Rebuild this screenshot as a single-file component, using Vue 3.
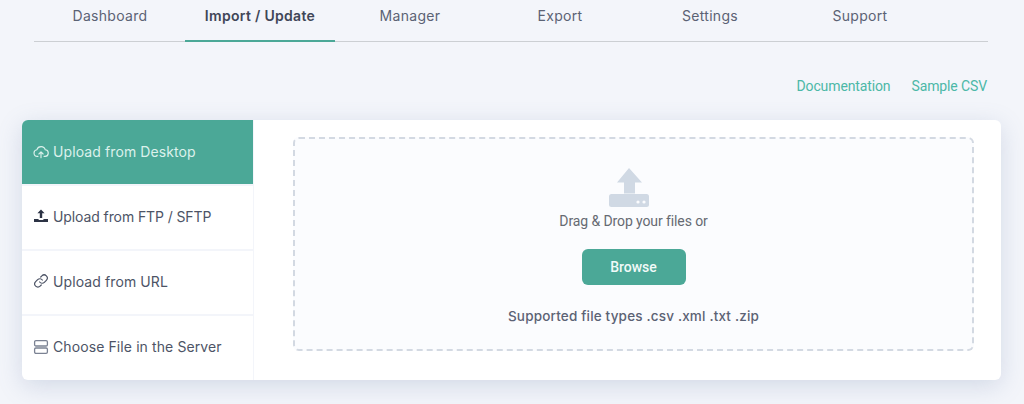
<template>
  <div class="page">
    <nav class="tabs">
      <a v-for="tab in tabs" :key="tab" class="tab" :class="{ active: tab === 'Import / Update' }">{{ tab }}</a>
    </nav>

    <div class="links">
      <a>Documentation</a>
      <a>Sample CSV</a>
    </div>

    <section class="card">
      <aside class="side">
        <a class="side-item active">
          <svg width="16" height="16" viewBox="0 0 24 24" fill="none" stroke="currentColor" stroke-width="1.7" stroke-linecap="round" stroke-linejoin="round">
            <path d="M7.5 18.5H6.5a5 5 0 0 1-.6-9.96A6.5 6.5 0 0 1 18.4 8.7a4.9 4.9 0 0 1-.9 9.8h-1" />
            <path d="M12 20.5V12M8.8 15l3.2-3.2 3.2 3.2" />
          </svg>
          Upload from Desktop
        </a>
        <a class="side-item dark">
          <svg width="16" height="16" viewBox="0 0 16 16" fill="currentColor">
            <path d="M8 1.6 11.6 5.2H9.2V10H6.8V5.2H4.4Z" />
            <path d="M1 11h4.6v.9h4.8V11H15v3H1Z" />
          </svg>
          Upload from FTP / SFTP
        </a>
        <a class="side-item">
          <svg width="16" height="16" viewBox="0 0 24 24" fill="none" stroke="currentColor" stroke-width="1.8" stroke-linecap="round" stroke-linejoin="round">
            <path d="M10 13.5a4.6 4.6 0 0 0 7 .5l3-3a4.7 4.7 0 0 0-6.7-6.7l-1.7 1.7" />
            <path d="M14 10.5a4.6 4.6 0 0 0-7-.5l-3 3a4.7 4.7 0 0 0 6.7 6.7l1.7-1.7" />
          </svg>
          Upload from URL
        </a>
        <a class="side-item">
          <svg width="16" height="16" viewBox="0 0 16 16" fill="none" stroke="#7b8293" stroke-width="1.3">
            <rect x="1.6" y="1.6" width="12.8" height="5.4" rx="1.3" />
            <rect x="1.6" y="9" width="12.8" height="5.4" rx="1.3" />
          </svg>
          Choose File in the Server
        </a>
      </aside>

      <div class="main">
        <div class="drop">
          <svg class="drop-icon" width="40" height="39" viewBox="0 0 40 39" fill="#d0d9e4">
            <path d="M20 0 33 14.5H26V25.4H15V14.5H8Z" />
            <rect x="0" y="26" width="40" height="13" rx="2.5" />
            <circle cx="29" cy="34" r="1.6" fill="#fbfcfe" />
            <circle cx="35" cy="34" r="1.6" fill="#fbfcfe" />
          </svg>
          <p class="drag">Drag &amp; Drop your files or</p>
          <button class="browse">Browse</button>
          <p class="types">Supported file types .csv .xml .txt .zip</p>
        </div>
      </div>
    </section>
  </div>
</template>

<script setup>
const tabs = ['Dashboard', 'Import / Update', 'Manager', 'Export', 'Settings', 'Support']
</script>

<style>
html,
body {
  margin: 0;
  background: #f3f5fa;
}
</style>

<style scoped>
.page {
  width: 1024px;
  height: 404px;
  overflow: hidden;
  box-sizing: border-box;
  padding: 0 23px 0 22px;
  background: #f3f5fa;
  font-family: Inter, sans-serif;
}
.tabs {
  display: flex;
  height: 42px;
  margin: 0 13px 0 12px;
  box-sizing: border-box;
  border-bottom: 1px solid #cccfd3;
}
.tab {
  box-sizing: border-box;
  width: 150px;
  height: 42px;
  line-height: 32px;
  text-align: center;
  font-size: 14px;
  letter-spacing: 0.3px;
  color: #5b6274;
}
.tab:first-child {
  margin-left: 1px;
}
.tab.active {
  border-bottom: 2px solid #4ba897;
  color: #3f4657;
  font-weight: 600;
}
.links {
  display: flex;
  justify-content: flex-end;
  gap: 21px;
  height: 78px;
  padding: 36px 14px 0 0;
  box-sizing: border-box;
  font-family: Roboto, sans-serif;
  font-size: 14px;
  letter-spacing: -0.12px;
  line-height: 17px;
  color: #4cb8a7;
}
.card {
  display: flex;
  width: 979px;
  height: 260px;
  border-radius: 6px;
  background: #fff;
  box-shadow: 0 6px 24px rgba(110, 130, 170, 0.24);
  overflow: hidden;
}
.side {
  width: 232px;
  flex: none;
  border-right: 1px solid #f3f5fa;
  box-sizing: border-box;
}
.side-item {
  display: flex;
  align-items: center;
  gap: 4px;
  height: 65px;
  padding: 0 0 3px 11px;
  box-sizing: border-box;
  font-size: 14px;
  letter-spacing: 0.1px;
  color: #4d5466;
  border-bottom: 2px solid #f3f5fa;
}
.side-item:first-child {
  height: 66px;
  padding-bottom: 1px;
}
.side-item:last-child {
  height: 64px;
  border-bottom: 0;
}
.side-item.active {
  background: #4ba897;
  color: #dcf1ec;
}
.side-item svg {
  flex: none;
}
.side-item.dark {
  letter-spacing: -0.1px;
}
.side-item.dark svg {
  color: #2c3345;
}
.main {
  flex: 1;
  padding: 17px 27px 29px 39px;
  box-sizing: border-box;
}
.drop {
  height: 214px;
  box-sizing: border-box;
  border: 2px dashed #d3d9e2;
  border-radius: 6px;
  background: #fbfcfe;
  display: flex;
  flex-direction: column;
  align-items: center;
  padding-top: 29px;
}
.drop-icon {
  display: block;
  margin-right: 9px;
}
.drag {
  margin: 5px 0 0;
  font-family: Roboto, sans-serif;
  font-size: 14px;
  letter-spacing: -0.1px;
  line-height: 18px;
  color: #666a72;
}
.browse {
  margin-top: 19px;
  width: 104px;
  height: 36px;
  border: 0;
  border-radius: 6px;
  background: #4ba897;
  color: #f1faf8;
  font-family: Roboto, sans-serif;
  font-size: 14px;
  font-weight: 500;
}
.types {
  margin: 22px 0 0;
  font-size: 13.5px;
  font-weight: 500;
  line-height: 18px;
  letter-spacing: 0.18px;
  color: #5b6274;
}
</style>
